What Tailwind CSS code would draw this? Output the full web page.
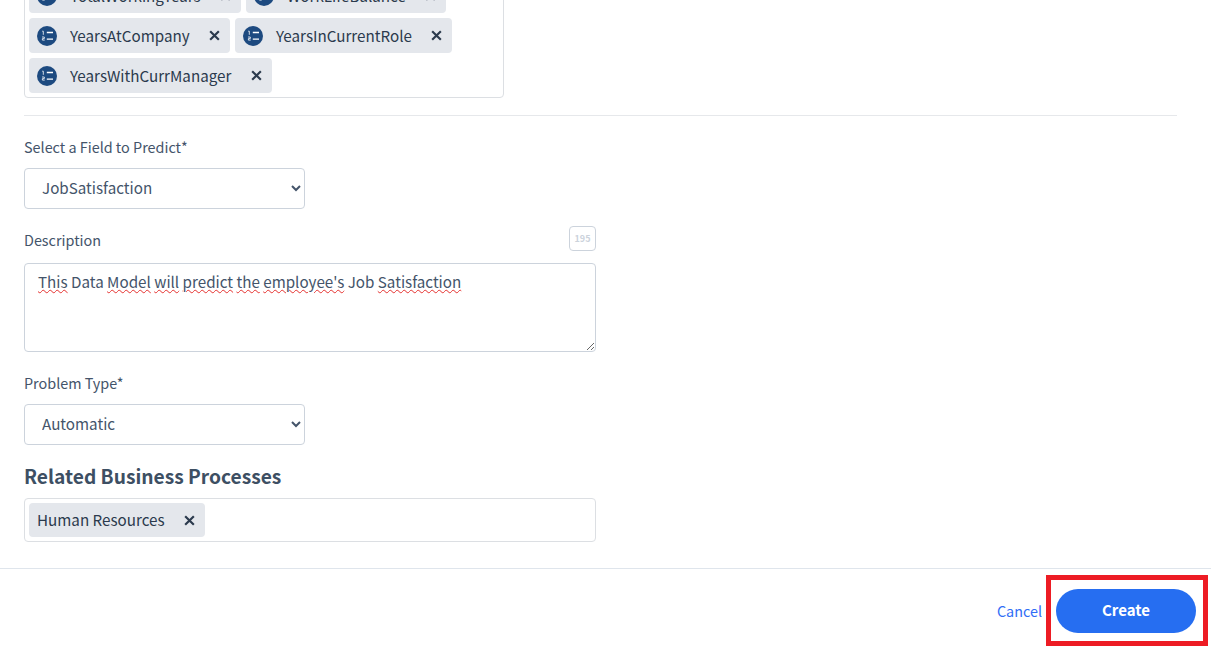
<!DOCTYPE html>
<html lang="en">
<head>
  <meta charset="UTF-8" />
  <title>Create Data Model</title>
  <script src="https://cdn.jsdelivr.net/npm/@tailwindcss/browser@4"></script>
</head>
<body class="bg-white h-[666px] overflow-hidden font-['Noto_Sans_CJK_SC','Noto_Sans',sans-serif] text-[#44546a]">
  <div class="w-[1211px]">

    <!-- Form -->
    <div class="h-[569px] overflow-hidden border-b border-[#dfe5ec]">
      <div class="pl-6 pr-[34px]">
        <!-- Field tags, scrolled partly out of view -->
        <div class="w-[480px] h-[125px] -mt-[27px] border border-[#dcdfe3] rounded p-1 flex flex-wrap content-start gap-x-[5px] gap-y-[5px] text-[#2b3a4d] text-[15.2px]">
          <span class="h-[35px] w-[212px] bg-[#e4e7ec] rounded flex items-center pl-2 pr-[9px]">
            <svg class="w-5 h-5 shrink-0" viewBox="0 0 20 20"><circle cx="10" cy="10" r="10" fill="#1d4a80"/><path d="M9.800 6.500h6.200M9.800 13.200h6.200" stroke="#fff" stroke-width="1.300"/><path d="M5.200 5.200h1.100v3.600M5 11h2.300v1.600h-1.900v1.500h2.300" stroke="#fff" fill="none" stroke-width=".8"/></svg>
            <span class="ml-[13px] flex-1 whitespace-nowrap">TotalWorkingYears</span>
            <svg class="w-[13px] h-[13px]" viewBox="0 0 12 12"><path d="M2 2l8 8M10 2l-8 8" stroke="#2b3a4d" stroke-width="2"/></svg>
          </span>
          <span class="h-[35px] w-[200px] bg-[#e4e7ec] rounded flex items-center pl-2 pr-[9px]">
            <svg class="w-5 h-5 shrink-0" viewBox="0 0 20 20"><circle cx="10" cy="10" r="10" fill="#1d4a80"/><path d="M9.800 6.500h6.200M9.800 13.200h6.200" stroke="#fff" stroke-width="1.300"/><path d="M5.200 5.200h1.100v3.600M5 11h2.300v1.600h-1.900v1.500h2.300" stroke="#fff" fill="none" stroke-width=".8"/></svg>
            <span class="ml-[13px] flex-1 whitespace-nowrap">WorkLifeBalance</span>
            <svg class="w-[13px] h-[13px]" viewBox="0 0 12 12"><path d="M2 2l8 8M10 2l-8 8" stroke="#2b3a4d" stroke-width="2"/></svg>
          </span>
          <span class="h-[35px] w-[201px] bg-[#e4e7ec] rounded flex items-center pl-2 pr-[9px]">
            <svg class="w-5 h-5 shrink-0" viewBox="0 0 20 20"><circle cx="10" cy="10" r="10" fill="#1d4a80"/><path d="M9.800 6.500h6.200M9.800 13.200h6.200" stroke="#fff" stroke-width="1.300"/><path d="M5.200 5.200h1.100v3.600M5 11h2.300v1.600h-1.900v1.500h2.300" stroke="#fff" fill="none" stroke-width=".8"/></svg>
            <span class="ml-[13px] flex-1 whitespace-nowrap">YearsAtCompany</span>
            <svg class="w-[13px] h-[13px]" viewBox="0 0 12 12"><path d="M2 2l8 8M10 2l-8 8" stroke="#2b3a4d" stroke-width="2"/></svg>
          </span>
          <span class="h-[35px] w-[217px] bg-[#e4e7ec] rounded flex items-center pl-2 pr-[9px]">
            <svg class="w-5 h-5 shrink-0" viewBox="0 0 20 20"><circle cx="10" cy="10" r="10" fill="#1d4a80"/><path d="M9.800 6.500h6.200M9.800 13.200h6.200" stroke="#fff" stroke-width="1.300"/><path d="M5.200 5.200h1.100v3.600M5 11h2.300v1.600h-1.900v1.500h2.300" stroke="#fff" fill="none" stroke-width=".8"/></svg>
            <span class="ml-[13px] flex-1 whitespace-nowrap">YearsInCurrentRole</span>
            <svg class="w-[13px] h-[13px]" viewBox="0 0 12 12"><path d="M2 2l8 8M10 2l-8 8" stroke="#2b3a4d" stroke-width="2"/></svg>
          </span>
          <span class="h-[35px] w-[243px] bg-[#e4e7ec] rounded flex items-center pl-2 pr-[9px]">
            <svg class="w-5 h-5 shrink-0" viewBox="0 0 20 20"><circle cx="10" cy="10" r="10" fill="#1d4a80"/><path d="M9.800 6.500h6.200M9.800 13.200h6.200" stroke="#fff" stroke-width="1.300"/><path d="M5.200 5.200h1.100v3.600M5 11h2.300v1.600h-1.900v1.500h2.300" stroke="#fff" fill="none" stroke-width=".8"/></svg>
            <span class="ml-[13px] flex-1 whitespace-nowrap">YearsWithCurrManager</span>
            <svg class="w-[13px] h-[13px]" viewBox="0 0 12 12"><path d="M2 2l8 8M10 2l-8 8" stroke="#2b3a4d" stroke-width="2"/></svg>
          </span>
        </div>

        <hr class="mt-[17px] border-[#e6e8eb]" />

        <label class="block mt-[21px] text-[14.4px] leading-5">Select a Field to Predict*</label>
        <select class="block mt-[11px] w-[281px] h-[41px] pl-[13px] pb-1 border border-[#ccd3dc] rounded bg-white text-[15.2px]">
          <option>JobSatisfaction</option>
        </select>

        <div class="w-[572px] mt-[17px] flex items-end justify-between">
          <label class="text-[14.4px] leading-5 mb-[1px]">Description</label>
          <span class="w-[27px] h-[25px] border border-[#ccd3dc] rounded flex items-center justify-center text-[9px] font-bold text-[#ccd3dc]">195</span>
        </div>
        <div class="mt-[12px] w-[572px] h-[89px] px-[13px] py-[5px] border border-[#ccd3dc] rounded text-[15.2px] leading-6 resize overflow-auto">
          <span class="underline decoration-wavy decoration-1 underline-offset-1 decoration-[#e5312f]">This</span> Data <span class="underline decoration-wavy decoration-1 underline-offset-1 decoration-[#e5312f]">Model</span> <span class="underline decoration-wavy decoration-1 underline-offset-1 decoration-[#e5312f]">will</span> <span class="underline decoration-wavy decoration-1 underline-offset-1 decoration-[#e5312f]">predict</span> <span class="underline decoration-wavy decoration-1 underline-offset-1 decoration-[#e5312f]">the</span> <span class="underline decoration-wavy decoration-1 underline-offset-1 decoration-[#e5312f]">employee's</span> Job <span class="underline decoration-wavy decoration-1 underline-offset-1 decoration-[#e5312f]">Satisfaction</span>
        </div>

        <label class="block mt-[21px] text-[14.4px] leading-5">Problem Type*</label>
        <select class="block mt-[11px] w-[281px] h-[41px] pl-[13px] pb-1 border border-[#ccd3dc] rounded bg-white text-[15.2px]">
          <option>Automatic</option>
        </select>

        <h2 class="mt-[17px] text-[19.2px] leading-7 font-semibold text-[#3d4f63]">Related Business Processes</h2>
        <div class="w-[572px] h-[44px] mt-[8px] border border-[#dcdfe3] rounded p-1 flex text-[#2b3a4d] text-[15.2px]">
          <span class="h-[34px] w-[176px] bg-[#e4e7ec] rounded flex items-center pl-2 pr-[9px]">
            <span class="flex-1 whitespace-nowrap pb-[2px]">Human Resources</span>
            <svg class="w-[13px] h-[13px]" viewBox="0 0 12 12"><path d="M2 2l8 8M10 2l-8 8" stroke="#2b3a4d" stroke-width="2"/></svg>
          </span>
        </div>
      </div>
    </div>

    <!-- Footer -->
    <div class="flex justify-end items-center h-[84px] pr-[15px]">
      <a href="#" class="text-[14.4px] text-[#2f6df6] mr-[14px]">Cancel</a>
      <button class="w-[140px] h-[44px] pb-[2px] rounded-full bg-[#266ef1] text-white font-bold text-[15px]">Create</button>
    </div>
  </div>

  <!-- Highlight drawn over the screenshot -->
  <div class="absolute left-[1046px] top-[575px] w-[162px] h-[71px] border-[5px] border-[#ed1c24]"></div>
</body>
</html>
